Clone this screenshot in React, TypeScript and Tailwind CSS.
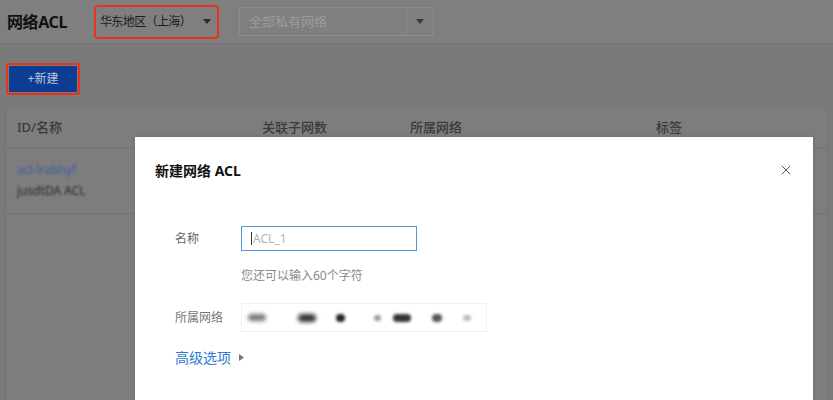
import { X } from 'lucide-react'

const font = { fontFamily: '"Noto Sans", "Noto Sans CJK SC", sans-serif' }

function Caret({ className = '' }: { className?: string }) {
  return (
    <svg width="8" height="5" viewBox="0 0 8 5" className={className}>
      <path d="M0 0 L8 0 L4 5 Z" fill="currentColor" />
    </svg>
  )
}

function Header() {
  return (
    <div className="flex h-[44px] items-center border-b border-[#737373] bg-[#7f7f7f] pl-[7px]">
      <h1 className="text-[16px] font-bold tracking-tight text-[#111]">网络ACL</h1>
      <div className="ml-[27px] flex h-[34px] w-[125px] items-center justify-between rounded-[4px] border-2 border-[#e8321c] pl-[4px] pr-[6px]">
        <span className="text-[12px] tracking-[-0.6px] text-[#1c1c1c]">华东地区（上海）</span>
        <Caret className="text-[#2a2a2a]" />
      </div>
      <div className="ml-[20px] flex h-[29px] w-[195px] items-center border border-[#8c8c8c]">
        <span className="flex-1 pl-[9px] text-[13px] text-[#9c9c9c]">全部私有网络</span>
        <div className="flex h-full w-[27px] items-center justify-center border-l border-[#8c8c8c]">
          <Caret className="text-[#3a3a3a]" />
        </div>
      </div>
    </div>
  )
}

function Table() {
  return (
    <div className="mx-[5px] mt-[12px] border-x border-t border-[#757575] bg-[#7d7d7d]">
      <div className="grid h-[40px] grid-cols-[245px_148px_246px_1fr] items-center border-b border-[#737373] pl-[11px] text-[13px] font-medium text-[#3a3a3a]">
        <span>ID/名称</span>
        <span>关联子网数</span>
        <span>所属网络</span>
        <span>标签</span>
      </div>
      <div className="flex h-[66px] flex-col justify-center gap-[3px] border-b border-[#737373] pl-[11px] text-[12px]">
        <span className="text-[#3d5fa8] blur-[1.2px]">acl-lrabhyf</span>
        <span className="text-[#2a2a2a] blur-[1.2px]">jusdtDA ACL</span>
      </div>
      <div className="h-[200px]" />
    </div>
  )
}

function Modal() {
  return (
    <div className="absolute left-[135px] top-[137px] h-[300px] w-[678px] bg-white shadow-[0_0_4px_rgba(0,0,0,0.15)]">
      <div className="flex h-[66px] items-center justify-between pl-[20px] pr-[19px]">
        <h2 className="text-[14px] font-bold text-[#111]">新建网络 ACL</h2>
        <X size={16} strokeWidth={1.5} className="text-[#555]" />
      </div>
      <div className="pl-[40px] pt-[23px]">
        <div className="flex items-center">
          <span className="w-[66px] text-[12px] text-[#666]">名称</span>
          <div className="flex h-[25px] w-[176px] items-center border border-[#5597d4] pl-[9px] text-[12px] text-[#b3b3b3]">
            <span className="mr-[1px] h-[13px] w-px bg-[#333]" />
            ACL_1
          </div>
        </div>
        <p className="ml-[66px] mt-[16px] text-[12px] text-[#8a8a8a]">您还可以输入60个字符</p>
        <div className="mt-[18px] flex items-center">
          <span className="w-[66px] text-[12px] text-[#777]">所属网络</span>
          <div className="flex h-[29px] w-[246px] items-center border border-[#f0f0f0] pl-[6px]">
            <span className="h-[7px] w-[18px] rounded-full bg-[#777] blur-[2px]" />
            <span className="ml-[32px] h-[8px] w-[18px] rounded-full bg-[#333] blur-[2px]" />
            <span className="ml-[20px] h-[8px] w-[9px] rounded-full bg-[#222] blur-[1.5px]" />
            <span className="ml-[29px] h-[6px] w-[7px] rounded-full bg-[#999] blur-[1.5px]" />
            <span className="ml-[12px] h-[8px] w-[18px] rounded-full bg-[#333] blur-[1.5px]" />
            <span className="ml-[21px] h-[8px] w-[10px] rounded-full bg-[#555] blur-[1.5px]" />
            <span className="ml-[21px] h-[6px] w-[8px] rounded-full bg-[#bbb] blur-[1.5px]" />
          </div>
        </div>
        <div className="mt-[15px] flex items-center">
          <span className="text-[14px] text-[#2f7ad6]">高级选项</span>
          <svg width="5" height="7" viewBox="0 0 5 7" className="ml-[8px] text-[#777]">
            <path d="M0 0 L5 3.5 L0 7 Z" fill="currentColor" />
          </svg>
        </div>
      </div>
    </div>
  )
}

export default function App() {
  return (
    <div className="relative h-[400px] w-[833px] overflow-hidden bg-[#7a7a7a]" style={font}>
      <Header />
      <div className="pl-[6px] pt-[19px]">
        <div className="inline-flex rounded-[3px] border-2 border-[#e8321c] p-px">
          <button className="h-[26px] w-[68px] bg-[#0d3d92] text-[12px] text-[#b9c4de]">+新建</button>
        </div>
      </div>
      <Table />
      <Modal />
    </div>
  )
}
